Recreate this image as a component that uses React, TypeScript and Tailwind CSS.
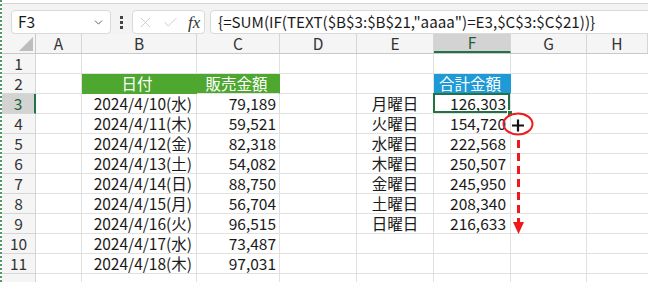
import { ChevronDown, X, Check } from "lucide-react";

// column widths (include the right border)
const cols = ["A", "B", "C", "D", "E", "F", "G", "H"];
const colW = ["w-[46px]", "w-[115px]", "w-[83px]", "w-[77px]", "w-[77px]", "w-[77px]", "w-[76px]", "flex-1"];

type RowData = { b?: string; c?: string; e?: string; f?: string };

const rows: RowData[] = [
  {},
  { b: "日付", c: "販売金額", f: "合計金額" },
  { b: "2024/4/10(水)", c: "79,189", e: "月曜日", f: "126,303" },
  { b: "2024/4/11(木)", c: "59,521", e: "火曜日", f: "154,720" },
  { b: "2024/4/12(金)", c: "82,318", e: "水曜日", f: "222,568" },
  { b: "2024/4/13(土)", c: "54,082", e: "木曜日", f: "250,507" },
  { b: "2024/4/14(日)", c: "88,750", e: "金曜日", f: "245,950" },
  { b: "2024/4/15(月)", c: "56,704", e: "土曜日", f: "208,340" },
  { b: "2024/4/16(火)", c: "96,515", e: "日曜日", f: "216,633" },
  { b: "2024/4/17(水)", c: "73,487" },
  { b: "2024/4/18(木)", c: "97,031" },
  {},
];

function Toolbar() {
  return (
    <div className="flex h-[35px] items-start bg-[#f3f3f3] pl-[9px] pt-[6px]">
      {/* name box */}
      <div className="flex h-[24px] w-[100px] items-center justify-between rounded-[4px] border border-[#dadada] bg-white pl-[6px] pr-[5px]">
        <span className="leading-none">F3</span>
        <ChevronDown className="h-[13px] w-[13px] text-[#444]" strokeWidth={1.5} />
      </div>
      <div className="flex h-[24px] w-[21px] flex-col items-center justify-center gap-[2px]">
        <div className="h-[3px] w-[3px] bg-[#444]" />
        <div className="h-[3px] w-[3px] bg-[#444]" />
        <div className="h-[3px] w-[3px] bg-[#444]" />
      </div>
      {/* cancel / enter / fx */}
      <div className="flex h-[24px] w-[73px] items-center rounded-[4px] border border-[#dadada] bg-white pl-[4px]">
        <X className="h-[17px] w-[17px] text-[#c4c4c4]" strokeWidth={1.2} />
        <Check className="ml-[8px] h-[17px] w-[17px] text-[#c4c4c4]" strokeWidth={1.2} />
        <span className="ml-[9px] font-['Liberation_Serif',serif] text-[17px] italic leading-none text-[#333]">fx</span>
      </div>
      {/* formula */}
      <div className="-mr-[4px] ml-[5px] flex h-[24px] flex-1 items-center rounded-[4px] border border-[#dadada] bg-white pl-[7px] text-[15.2px]">
        <span className="whitespace-nowrap leading-none">{'{=SUM(IF(TEXT($B$3:$B$21,"aaaa")=E3,$C$3:$C$21))}'}</span>
      </div>
    </div>
  );
}

function HeaderRow() {
  return (
    <div className="flex h-[20px] shrink-0 border-b border-[#c9c9c9] bg-[#f5f5f5] text-[#333]">
      <div className="relative w-[34px] shrink-0 border-r border-[#c9c9c9]">
        <div className="absolute bottom-[2px] right-[2px] h-0 w-0 border-b-[14px] border-l-[14px] border-b-[#bdbdbd] border-l-transparent" />
      </div>
      {cols.map((c, i) => (
        <div
          key={c}
          className={`${colW[i]} flex shrink-0 items-center justify-center border-r border-[#d6d6d6] ${
            c === "F" ? "border-b-2 border-b-[#217346] bg-[#d3d3d3] text-[#1d5e38]" : ""
          }`}
        >
          {c}
        </div>
      ))}
    </div>
  );
}

function SheetRow({ n, r }: { n: number; r: RowData }) {
  const isHead = n === 2;
  const sel = n === 3;
  return (
    <div className="flex h-[20px] shrink-0 leading-[19px]">
      <div
        className={`flex w-[34px] shrink-0 items-center justify-center border-b border-r border-[#d6d6d6] ${
          sel ? "border-r-2 border-r-[#217346] bg-[#d3d3d3] text-[#1d5e38]" : "bg-[#f5f5f5] text-[#333]"
        }`}
      >
        {n < 12 ? n : null}
      </div>
      <div className="w-[46px] shrink-0 border-b border-r border-[#e1e1e1]" />
      <div
        className={`flex w-[115px] shrink-0 items-center border-b border-r pr-[4px] ${
          isHead ? "justify-center border-[#4ea72e] bg-[#4ea72e] text-white" : "justify-end border-[#e1e1e1]"
        }`}
      >
        {r.b}
      </div>
      <div
        className={`flex w-[83px] shrink-0 items-center border-b border-r pr-[3px] ${
          isHead ? "justify-center border-b-[#e1e1e1] border-r-[#4ea72e] bg-[#4ea72e] text-white" : "justify-end border-[#e1e1e1]"
        }`}
      >
        {r.c}
      </div>
      <div className="w-[77px] shrink-0 border-b border-r border-[#e1e1e1]" />
      <div className="flex w-[77px] shrink-0 items-center justify-center border-b border-r border-[#e1e1e1]">{r.e}</div>
      <div
        className={`relative flex w-[77px] shrink-0 items-center border-b border-r pr-[4px] ${
          isHead ? "justify-center bg-[#1e9ad6] text-white border-b-[#e1e1e1] border-r-[#1e9ad6]" : "justify-end border-[#e1e1e1]"
        }`}
      >
        {r.f}
        {sel && (
          <>
            <div className="pointer-events-none absolute -left-[1px] -top-[1px] bottom-0 right-0 border-2 border-[#217346]" />
            <div className="absolute -bottom-[3px] -right-[3px] h-[6px] w-[6px] border border-white bg-[#217346]" />
          </>
        )}
      </div>
      <div className="w-[76px] shrink-0 border-b border-r border-[#e1e1e1]" />
      <div className="flex-1 border-b border-[#e1e1e1]" />
    </div>
  );
}

function Marks() {
  return (
    <svg className="pointer-events-none absolute left-0 top-0" width={648} height={282}>
      <ellipse cx={518} cy={124} rx={14.5} ry={10.5} fill="none" stroke="#ee1c1c" strokeWidth={2} />
      <path d="M512 125.5h12M518 119.5v12" stroke="#111" strokeWidth={2.2} />
      <line x1={518.5} y1={140} x2={518.5} y2={223} stroke="#f01818" strokeWidth={3} strokeDasharray="8 5" />
      <polygon points="513,222 524,222 518.5,234" fill="#f01818" />
    </svg>
  );
}

export default function App() {
  return (
    <div className="relative flex h-[282px] w-[648px] overflow-hidden bg-white font-['Noto_Sans_CJK_JP','Noto_Sans',sans-serif] text-[15.5px] text-[#1a1a1a]">
      <div className="w-[2px] shrink-0 border-l-2 border-dotted border-[#4f9a66]" />
      <div className="flex min-w-0 flex-1 flex-col">
        <div className="h-[4px] shrink-0 border-b border-[#d4d4d4] bg-white" />
        <Toolbar />
        <HeaderRow />
        {rows.map((r, i) => (
          <SheetRow key={i} n={i + 1} r={r} />
        ))}
      </div>
      <Marks />
    </div>
  );
}
